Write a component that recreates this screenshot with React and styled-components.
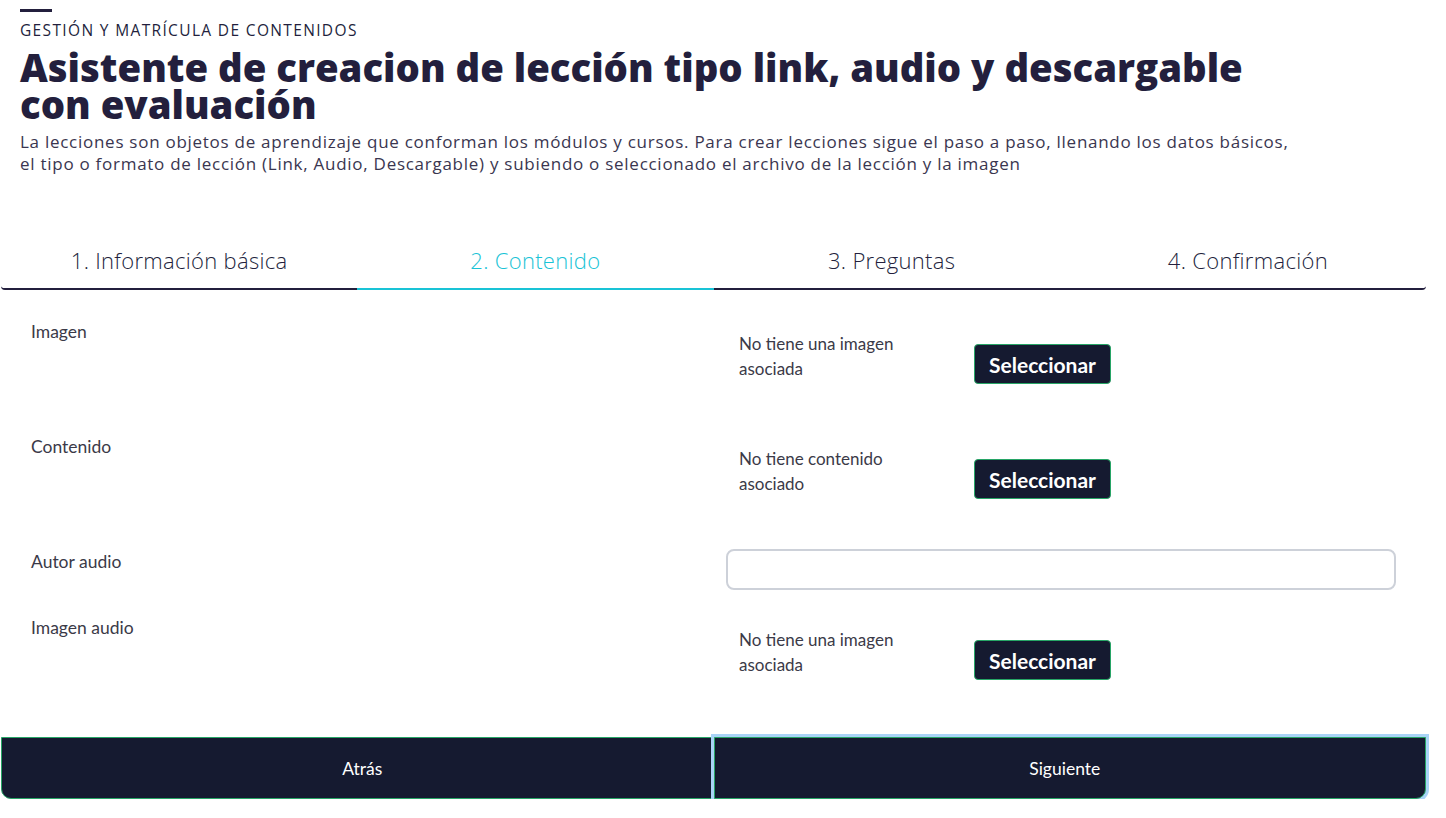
import React, { useState } from 'react';
import styled, { createGlobalStyle } from 'styled-components';

const GlobalStyle = createGlobalStyle`
  body {
    margin: 0;
    background: #ffffff;
    font-family: 'Lato', 'Open Sans', sans-serif;
  }
  * {
    box-sizing: border-box;
  }
`;

const steps = ['1. Información básica', '2. Contenido', '3. Preguntas', '4. Confirmación'];

const fields = [
  { label: 'Imagen', kind: 'select', empty: 'No tiene una imagen asociada' },
  { label: 'Contenido', kind: 'select', empty: 'No tiene contenido asociado' },
  { label: 'Autor audio', kind: 'input' },
  { label: 'Imagen audio', kind: 'select', empty: 'No tiene una imagen asociada' },
];

const App = () => {
  const [active, setActive] = useState(1);
  const [author, setAuthor] = useState('');

  return (
    <>
      <GlobalStyle />
      <Page>
        <Header>
          <Accent />
          <Overline>GESTIÓN Y MATRÍCULA DE CONTENIDOS</Overline>
          <Title>Asistente de creacion de lección tipo link, audio y descargable con evaluación</Title>
          <Description>
            La lecciones son objetos de aprendizaje que conforman los módulos y cursos. Para crear lecciones sigue el
            paso a paso, llenando los datos básicos,
            <br />
            el tipo o formato de lección (Link, Audio, Descargable) y subiendo o seleccionado el archivo de la lección
            y la imagen
          </Description>
        </Header>

        <Wizard>
          <Tabs>
            {steps.map((step, i) => (
              <Tab key={step} active={i === active} onClick={() => setActive(i)}>
                {step}
              </Tab>
            ))}
          </Tabs>

          <Form>
            {fields.map((field) => (
              <Row key={field.label} compact={field.kind === 'input'}>
                <Label>{field.label}</Label>
                {field.kind === 'input' ? (
                  <Input value={author} onChange={(e) => setAuthor(e.target.value)} />
                ) : (
                  <Picker>
                    <Empty>{field.empty}</Empty>
                    <SelectButton>Seleccionar</SelectButton>
                  </Picker>
                )}
              </Row>
            ))}
          </Form>

          <Footer>
            <NavButton side='left'>Atrás</NavButton>
            <NavButton side='right' focused>
              Siguiente
            </NavButton>
          </Footer>
        </Wizard>
      </Page>
    </>
  );
};

const Page = styled.div`
  width: 1446px;
  padding: 9px 20px 0 1px;
`;

const Header = styled.header`
  padding: 0 0 0 19px;
  color: #231f3d;
`;

const Accent = styled.div`
  width: 32px;
  height: 3px;
  background: #231f3d;
`;

const Overline = styled.div`
  margin-top: 9px;
  font-family: 'Open Sans', sans-serif;
  font-size: 15.5px;
  line-height: 18px;
  letter-spacing: 1.35px;
  color: #231f3d;
`;

const Title = styled.h1`
  margin: 9.5px 0 0;
  width: 1300px;
  font-family: 'Open Sans', sans-serif;
  font-weight: 800;
  font-size: 38.3px;
  line-height: 37px;
  letter-spacing: 0;
  color: #231f3d;
`;

const Description = styled.p`
  margin: 8.5px 0 0;
  width: 1400px;
  font-family: 'Open Sans', sans-serif;
  font-size: 17px;
  line-height: 22px;
  letter-spacing: 0.73px;
  color: #3a3650;
`;

const Wizard = styled.section`
  margin-top: 59px;
`;

const Tabs = styled.div`
  display: grid;
  grid-template-columns: repeat(4, 1fr);
  border-bottom: 2px solid #231f3d;
  border-radius: 0 0 4px 4px;
`;

const Tab = styled.div`
  height: 56px;
  padding-top: 12px;
  text-align: center;
  font-family: 'Open Sans', sans-serif;
  font-weight: 300;
  font-size: 22px;
  line-height: 28px;
  letter-spacing: 0.3px;
  color: ${(props) => (props.active ? '#19c3d6' : '#231f3d')};
  border-bottom: 2px solid ${(props) => (props.active ? '#19c3d6' : 'transparent')};
  margin-bottom: -2px;
  cursor: pointer;
`;

const Form = styled.div`
  padding: 32px 0 0;
`;

const Row = styled.div`
  display: grid;
  grid-template-columns: 725px 1fr;
  min-height: ${(props) => (props.compact ? '66px' : '115px')};
  align-items: start;
`;

const Label = styled.div`
  padding-left: 30px;
  font-size: 17.5px;
  line-height: 20px;
  color: #3b3a48;
`;

const Picker = styled.div`
  display: flex;
  align-items: flex-start;
  padding: 9px 0 0 13px;
`;

const Empty = styled.div`
  width: 235px;
  padding-right: 50px;
  font-size: 17px;
  line-height: 25px;
  color: #3b3a48;
`;

const SelectButton = styled.button`
  width: 137px;
  height: 40px;
  margin-top: 13px;
  padding: 0;
  background: #151a30;
  border: 1px solid #27a566;
  border-radius: 4px;
  color: #ffffff;
  font-family: 'Lato', sans-serif;
  font-weight: 700;
  font-size: 21px;
  cursor: pointer;
`;

const Input = styled.input`
  width: 670px;
  height: 41px;
  margin-top: -3px;
  border: 2px solid #cdd1d9;
  border-radius: 8px;
  font-family: 'Lato', sans-serif;
  font-size: 16px;
  padding: 0 12px;
  outline: none;
`;

const Footer = styled.div`
  display: grid;
  grid-template-columns: 1fr 1fr;
  margin-top: 4px;
`;

const NavButton = styled.button`
  height: 62px;
  padding: ${(props) => (props.side === 'left' ? '0 0 0 10px' : '0 10px 0 0')};
  background: #151a30;
  border: 1px solid #27a566;
  border-radius: ${(props) => (props.side === 'left' ? '0 0 0 10px' : '0 0 10px 0')};
  color: #ffffff;
  font-family: 'Lato', sans-serif;
  font-size: 17.5px;
  cursor: pointer;
  box-shadow: ${(props) => (props.focused ? '0 0 0 3px #a9d4f7' : 'none')};
  position: relative;
  z-index: ${(props) => (props.focused ? 1 : 0)};
`;

export default App;
